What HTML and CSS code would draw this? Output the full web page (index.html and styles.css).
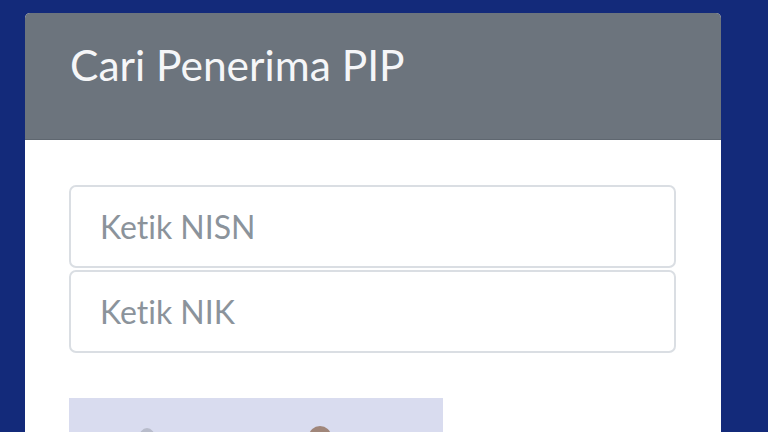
FILE: index.html
```html
<!DOCTYPE html>
<html lang="id">
<head>
<meta charset="utf-8">
<title>Cari Penerima PIP</title>
<link rel="stylesheet" href="styles.css">
</head>
<body>
<div class="page">
  <div class="card">
    <div class="card-header">
      <h4 class="card-title">Cari Penerima PIP</h4>
    </div>
    <div class="card-body">
      <div class="fields">
        <input class="form-control" type="text" placeholder="Ketik NISN">
        <input class="form-control" type="text" placeholder="Ketik NIK">
      </div>
      <div class="captcha">
        <span class="blob blob-a"></span>
        <span class="blob blob-b"></span>
      </div>
    </div>
  </div>
</div>
</body>
</html>
```
FILE: styles.css
```css
html, body {
  margin: 0;
  padding: 0;
  height: 100%;
  overflow: hidden;
}
body {
  background: #132a7a;
  font-family: Lato, "Open Sans", sans-serif;
  font-variant-ligatures: none;
}
.page {
  padding: 13px 47px 0 25px;
}
.card {
  background: #ffffff;
  border-radius: 5px 5px 0 0;
  overflow: hidden;
  width: 696px;
}
.card-header {
  background: #6c747d;
  height: 127px;
  padding: 31px 45px 0;
  box-sizing: border-box;
  border-bottom: 1px solid #5f6770;
}
.card-title {
  margin: 0;
  color: #f5f6f8;
  font-weight: 400;
  font-size: 42.5px;
  line-height: 1;
}
.card-body {
  padding: 45px 45px 0 44px;
}
.fields {
  display: flex;
  flex-direction: column;
  gap: 2px;
  width: 607px;
}
.form-control {
  height: 83px;
  box-sizing: border-box;
  border: 2px solid #dadee3;
  border-radius: 7px;
  padding: 0 29px;
  font-family: Lato, "Open Sans", sans-serif;
  font-variant-ligatures: none;
  font-size: 32px;
  color: #495057;
  background: #fff;
  outline: none;
}
.form-control::placeholder {
  color: #8b939b;
}
.captcha {
  position: relative;
  margin-top: 45px;
  width: 374px;
  height: 80px;
  background: #d9dcef;
}
.blob {
  position: absolute;
  border-radius: 50% 50% 0 0;
}
.blob-a {
  left: 70px;
  top: 30px;
  width: 16px;
  height: 20px;
  background: #b8bccb;
}
.blob-b {
  left: 240px;
  top: 28px;
  width: 22px;
  height: 20px;
  background: #a0867a;
}
```
